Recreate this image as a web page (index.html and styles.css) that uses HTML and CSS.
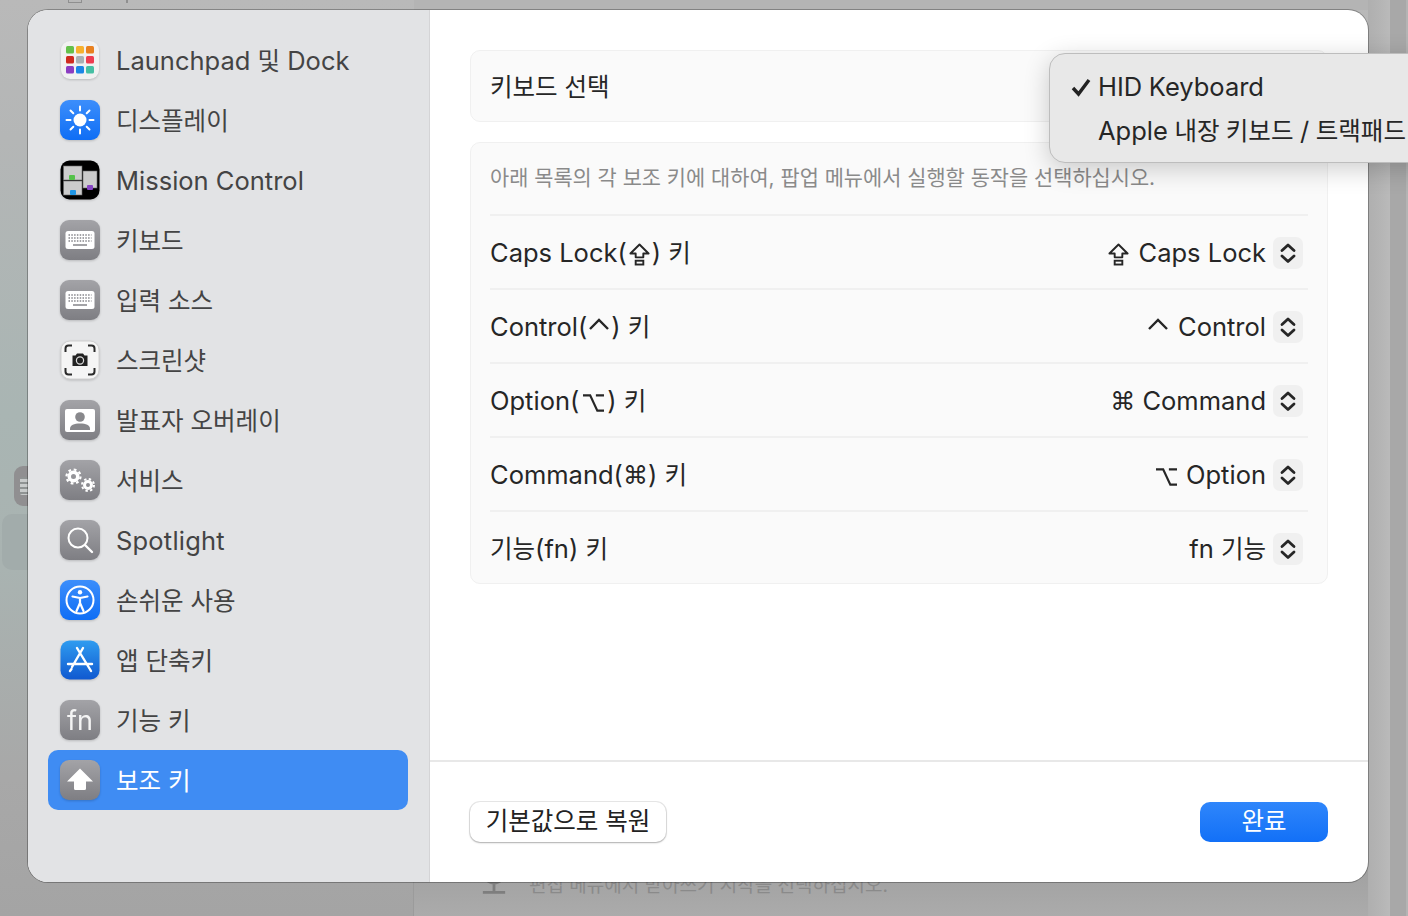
FILE: index.html
```html
<!DOCTYPE html>
<html lang="ko">
<head>
<meta charset="utf-8">
<title>보조 키</title>
<link rel="stylesheet" href="styles.css">
</head>
<body>
<div class="behind behind-tile"><span class="behind-key"></span></div>
<div class="behind behind-well"></div>
<div class="behind behind-panel"></div>
<div class="behind behind-strip-a"></div>
<div class="behind behind-strip-b"></div>
<div class="behind behind-top"></div>
<div class="behind behind-frag-a"></div>
<div class="behind behind-frag-b"></div>
<div class="behind behind-hint">
  <svg class="behind-mic" viewBox="0 0 28 28"><path d="M3 2a11 12 0 0 0 22 0M14 14v9M2 24h24" fill="none" stroke="#7e7e7e" stroke-width="3"/></svg>
  <span>편집 메뉴에서 받아쓰기 시작을 선택하십시오.</span>
</div>

<div class="window">
  <aside class="sidebar">
    <div class="nav-item">
      <svg class="icon" viewBox="0 0 40 40"><rect x="1" y="1" width="38" height="38" rx="9" fill="#f1f1f1"/><rect x="6" y="6" width="8" height="7.500" rx="1.500" fill="#64c04a"/><rect x="16" y="6" width="8" height="7.500" rx="1.500" fill="#f6b12e"/><rect x="26" y="6" width="8" height="7.500" rx="1.500" fill="#e8801f"/><rect x="6" y="16" width="8" height="7.500" rx="1.500" fill="#cf2a1f"/><rect x="16" y="16" width="8" height="7.500" rx="1.500" fill="#a9b0b4"/><rect x="26" y="16" width="8" height="7.500" rx="1.500" fill="#ee3c50"/><rect x="6" y="26" width="8" height="7.500" rx="1.500" fill="#8b3cc2"/><rect x="16" y="26" width="8" height="7.500" rx="1.500" fill="#1b86e6"/><rect x="26" y="26" width="8" height="7.500" rx="1.500" fill="#45bfa3"/></svg>
      <span class="lift">Launchpad <span class="ko">및</span> Dock</span>
    </div>
    <div class="nav-item">
      <svg class="icon" viewBox="0 0 40 40"><defs><linearGradient id="blue" x1="0" y1="0" x2="0" y2="1"><stop offset="0" stop-color="#3c8efb"/><stop offset="1" stop-color="#0f6ef5"/></linearGradient><linearGradient id="gray" x1="0" y1="0" x2="0" y2="1"><stop offset="0" stop-color="#a3a3a7"/><stop offset="1" stop-color="#7e7e83"/></linearGradient><linearGradient id="store" x1="0" y1="0" x2="0" y2="1"><stop offset="0" stop-color="#2f9cf0"/><stop offset="1" stop-color="#1059d0"/></linearGradient></defs><rect width="40" height="40" rx="9" fill="url(#blue)"/><circle cx="20" cy="20" r="6.500" fill="#fff"/><path d="M20 6.500v4M20 29.500v4M6.500 20h4M29.500 20h4M10.500 10.500l2.800 2.800M26.700 26.700l2.800 2.800M10.500 29.500l2.800-2.800M26.700 13.300l2.800-2.800" stroke="#fff" stroke-width="2" stroke-linecap="round"/></svg>
      <span class="ko lift">디스플레이</span>
    </div>
    <div class="nav-item">
      <svg class="icon" viewBox="0 0 40 40"><rect x="0.500" y="0.500" width="39" height="39" rx="9" fill="#000"/><rect x="3.500" y="6" width="18.500" height="14" fill="#ccc" stroke="#666" stroke-width=".6"/><rect x="3.500" y="21" width="18.500" height="14" fill="#ccc" stroke="#666" stroke-width=".6"/><rect x="23" y="11" width="14" height="17" fill="#ccc" stroke="#666" stroke-width=".6"/><rect x="9" y="15" width="6" height="5" rx="1" fill="#55c24a"/><rect x="10" y="30" width="6" height="5" rx="1" fill="#1f96e6"/><rect x="27" y="25" width="6" height="5" rx="1" fill="#8745c4"/></svg>
      <span class="drop">Mission Control</span>
    </div>
    <div class="nav-item">
      <svg class="icon" viewBox="0 0 40 40"><rect width="40" height="40" rx="9" fill="url(#gray)"/><rect x="5.500" y="11" width="29" height="18" rx="2.500" fill="#fff"/><path d="M8.500 15h23M8.500 18h23M8.500 21h23" stroke="#85858a" stroke-width="1.500" stroke-dasharray="1.500 1.300"/><path d="M13 25h14" stroke="#85858a" stroke-width="1.500"/></svg>
      <span class="ko lift">키보드</span>
    </div>
    <div class="nav-item">
      <svg class="icon" viewBox="0 0 40 40"><rect width="40" height="40" rx="9" fill="url(#gray)"/><rect x="5.500" y="11" width="29" height="18" rx="2.500" fill="#fff"/><path d="M8.500 15h23M8.500 18h23M8.500 21h23" stroke="#85858a" stroke-width="1.500" stroke-dasharray="1.500 1.300"/><path d="M13 25h14" stroke="#85858a" stroke-width="1.500"/></svg>
      <span class="ko lift">입력 소스</span>
    </div>
    <div class="nav-item">
      <svg class="icon" viewBox="0 0 40 40"><rect x="1" y="1" width="38" height="38" rx="9" fill="#f5f5f5" stroke="#d0d0d0"/><path d="M5.500 12V8.500a3 3 0 0 1 3-3H12M28 5.500h3.500a3 3 0 0 1 3 3V12M34.500 28v3.500a3 3 0 0 1-3 3H28M12 34.500H8.500a3 3 0 0 1-3-3V28" fill="none" stroke="#2a2a2a" stroke-width="2"/><path d="M12.500 15.500h3l1.500-2h6l1.500 2h3v10.500h-15z" fill="#222"/><circle cx="20" cy="20.500" r="3.600" fill="none" stroke="#ddd" stroke-width="1.200"/></svg>
      <span class="ko lift">스크린샷</span>
    </div>
    <div class="nav-item">
      <svg class="icon" viewBox="0 0 40 40"><rect width="40" height="40" rx="9" fill="url(#gray)"/><rect x="5" y="9" width="30" height="23" rx="2" fill="#fff"/><circle cx="20" cy="17" r="4.800" fill="#88888c"/><path d="M10 30v-1c0-4 4-5.500 10-5.500s10 1.500 10 5.500v1z" fill="#88888c"/></svg>
      <span class="ko lift">발표자 오버레이</span>
    </div>
    <div class="nav-item">
      <svg class="icon" viewBox="0 0 40 40"><rect width="40" height="40" rx="9" fill="url(#gray)"/><circle cx="13.500" cy="16.500" r="4.250" fill="none" stroke="#fff" stroke-width="3.500"/><circle cx="13.500" cy="16.500" r="7" fill="none" stroke="#fff" stroke-width="2.200" stroke-dasharray="2.750 2.750"/><circle cx="28" cy="25" r="3.500" fill="none" stroke="#fff" stroke-width="3"/><circle cx="28" cy="25" r="6" fill="none" stroke="#fff" stroke-width="2" stroke-dasharray="2.360 2.360"/></svg>
      <span class="ko lift">서비스</span>
    </div>
    <div class="nav-item">
      <svg class="icon" viewBox="0 0 40 40"><rect width="40" height="40" rx="9" fill="url(#gray)"/><circle cx="18" cy="18" r="9.500" fill="none" stroke="#fff" stroke-width="2"/><path d="M25 25l7 7" stroke="#fff" stroke-width="2.400" stroke-linecap="round"/></svg>
      <span class="wide">Spotlight</span>
    </div>
    <div class="nav-item">
      <svg class="icon" viewBox="0 0 40 40"><rect width="40" height="40" rx="9" fill="url(#blue)"/><circle cx="20" cy="20" r="13.500" fill="none" stroke="#fff" stroke-width="2"/><circle cx="20" cy="12.300" r="2.200" fill="#fff"/><path d="M12.500 16.500L20 18l7.500-1.500M20 18v5M20 23l-3.500 8M20 23l3.500 8" fill="none" stroke="#fff" stroke-width="2.200" stroke-linecap="round" stroke-linejoin="round"/></svg>
      <span class="ko lift">손쉬운 사용</span>
    </div>
    <div class="nav-item">
      <svg class="icon" viewBox="0 0 40 40"><rect x="0.500" y="0.500" width="39" height="39" rx="9" fill="url(#store)"/><path d="M23 8L12 27M17 8l14 23M8 24h24M10 31l1.500-2" fill="none" stroke="#fff" stroke-width="2.400" stroke-linecap="round"/></svg>
      <span class="ko lift">앱 단축키</span>
    </div>
    <div class="nav-item">
      <span class="icon fn-tile">fn</span>
      <span class="ko lift">기능 키</span>
    </div>
    <div class="nav-item nav-active">
      <svg class="icon" viewBox="0 0 40 40"><rect width="40" height="40" rx="9" fill="url(#gray)"/><path d="M20 8.500L33 21.500h-7v7a1.500 1.500 0 0 1-1.500 1.500h-9a1.500 1.500 0 0 1-1.500-1.500v-7H7z" fill="#fff"/></svg>
      <span class="ko lift">보조 키</span>
    </div>
  </aside>

  <main class="main">
    <div class="content">
      <section class="card card-select"><span class="ko lift">키보드 선택</span></section>
      <section class="card">
        <p class="hint">아래 목록의 각 보조 키에 대하여, 팝업 메뉴에서 실행할 동작을 선택하십시오.</p>
        <div class="row">
          <span class="label">Caps Lock(<svg class="sym sym-caps" viewBox="0 0 22 24"><path d="M11 1.500L20.500 11H15v4H7v-4H1.500z" fill="none" stroke="#262626" stroke-width="2" stroke-linejoin="round"/><rect x="7" y="18.500" width="8" height="4" fill="none" stroke="#262626" stroke-width="2"/></svg>) <span class="ko">키</span></span>
          <div class="value"><span><svg class="sym sym-caps" viewBox="0 0 22 24"><path d="M11 1.500L20.500 11H15v4H7v-4H1.500z" fill="none" stroke="#262626" stroke-width="2" stroke-linejoin="round"/><rect x="7" y="18.500" width="8" height="4" fill="none" stroke="#262626" stroke-width="2"/></svg> Caps Lock</span><svg class="stepper" viewBox="0 0 30 32"><rect width="30" height="32" rx="7" fill="#f0f0f0"/><path d="M9 13.500L15 8l6 5.500M9 19l6 5.500L21 19" fill="none" stroke="#262626" stroke-width="2.800" stroke-linecap="round" stroke-linejoin="round"/></svg></div>
        </div>
        <div class="row">
          <span class="label">Control(<svg class="sym sym-ctrl" viewBox="0 0 22 14"><path d="M2 12L11 3l9 9" fill="none" stroke="#262626" stroke-width="2.400"/></svg>) <span class="ko">키</span></span>
          <div class="value"><span><svg class="sym sym-ctrl" viewBox="0 0 22 14"><path d="M2 12L11 3l9 9" fill="none" stroke="#262626" stroke-width="2.400"/></svg> Control</span><svg class="stepper" viewBox="0 0 30 32"><rect width="30" height="32" rx="7" fill="#f0f0f0"/><path d="M9 13.500L15 8l6 5.500M9 19l6 5.500L21 19" fill="none" stroke="#262626" stroke-width="2.800" stroke-linecap="round" stroke-linejoin="round"/></svg></div>
        </div>
        <div class="row">
          <span class="label">Option(<svg class="sym sym-opt" viewBox="0 0 22 20"><path d="M0 2h7.500L15 18h7M13.500 2H22" fill="none" stroke="#262626" stroke-width="2.300"/></svg>) <span class="ko">키</span></span>
          <div class="value"><span><span class="sym-cmd">⌘</span> Command</span><svg class="stepper" viewBox="0 0 30 32"><rect width="30" height="32" rx="7" fill="#f0f0f0"/><path d="M9 13.500L15 8l6 5.500M9 19l6 5.500L21 19" fill="none" stroke="#262626" stroke-width="2.800" stroke-linecap="round" stroke-linejoin="round"/></svg></div>
        </div>
        <div class="row">
          <span class="label">Command(<span class="sym-cmd">⌘</span>) <span class="ko">키</span></span>
          <div class="value"><span><svg class="sym sym-opt" viewBox="0 0 22 20"><path d="M0 2h7.500L15 18h7M13.500 2H22" fill="none" stroke="#262626" stroke-width="2.300"/></svg> Option</span><svg class="stepper" viewBox="0 0 30 32"><rect width="30" height="32" rx="7" fill="#f0f0f0"/><path d="M9 13.500L15 8l6 5.500M9 19l6 5.500L21 19" fill="none" stroke="#262626" stroke-width="2.800" stroke-linecap="round" stroke-linejoin="round"/></svg></div>
        </div>
        <div class="row">
          <span class="label"><span class="ko">기능</span>(fn) <span class="ko">키</span></span>
          <div class="value"><span>fn <span class="ko">기능</span></span><svg class="stepper" viewBox="0 0 30 32"><rect width="30" height="32" rx="7" fill="#f0f0f0"/><path d="M9 13.500L15 8l6 5.500M9 19l6 5.500L21 19" fill="none" stroke="#262626" stroke-width="2.800" stroke-linecap="round" stroke-linejoin="round"/></svg></div>
        </div>
      </section>
    </div>
    <footer class="footer">
      <button class="btn btn-plain"><span class="ko">기본값으로 복원</span></button>
      <button class="btn btn-primary"><span class="ko">완료</span></button>
    </footer>
  </main>
</div>

<div class="popup">
  <div class="popup-item"><svg class="check" viewBox="0 0 20 20"><path d="M2 11l5.500 6L18 3" fill="none" stroke="#222" stroke-width="3.400"/></svg><span>HID Keyboard</span></div>
  <div class="popup-item"><span class="check"></span><span>Apple <span class="ko">내장 키보드</span> / <span class="ko">트랙패드</span></span></div>
</div>
</body>
</html>
```

FILE: styles.css
```css
* { box-sizing: border-box; }

html, body { height: 100%; }

body {
  margin: 0;
  overflow: hidden;
  position: relative;
  padding: 10px 0 0 28px;
  font-family: Inter, "Noto Sans CJK KR", "DejaVu Sans", sans-serif;
  font-size: 25.5px;
  color: #262626;
  background:
    linear-gradient(180deg, #b9b9b9 0, #b4b6b6 15%, #a9b5b3 45%, #a9b3b1 62%, #a8a8a8 85%, #a4a4a4 100%);
}

.ko { font-size: 24.5px; }

.lift { margin-bottom: 2px; }

.drop { margin-top: 1px; }

.wide { letter-spacing: .2px; }

.sym { display: inline-block; margin: 0 2px; }

.sym-caps { width: 21px; height: 23px; vertical-align: -4px; }

.sym-ctrl { width: 22px; height: 14px; vertical-align: 5px; }

.sym-opt { width: 21px; height: 20px; vertical-align: -3px; }

.sym-cmd { font-family: "DejaVu Sans", sans-serif; font-size: 25px; }

/* Things behind the sheet */
.behind { position: absolute; }

.behind-tile {
  left: 14px;
  top: 466px;
  width: 40px;
  height: 40px;
  border-radius: 9px;
  background: #908f91;
}

.behind-key {
  position: absolute;
  left: 6px;
  top: 11px;
  width: 28px;
  height: 18px;
  border-radius: 2px;
  background: repeating-linear-gradient(180deg, #8f9393 0 2px, #c8cbcb 2px 5px);
}

.behind-well {
  left: 2px;
  top: 514px;
  width: 40px;
  height: 56px;
  border-radius: 10px;
  background: #a2acab;
}

.behind-panel {
  left: 413px;
  top: 860px;
  width: 955px;
  height: 56px;
  border-left: 1px solid #9b9b9b;
  background: linear-gradient(180deg, #9f9f9f, #ababab);
}

.behind-strip-a {
  left: 1368px;
  top: 0;
  width: 22px;
  height: 916px;
  background: linear-gradient(90deg, #afafaf 0, #b5b5b5 60%, #bababa 100%);
}

.behind-strip-b {
  left: 1390px;
  top: 0;
  width: 18px;
  height: 916px;
  background: linear-gradient(90deg, #a8a8a8 0, #a8a8a8 88%, #b4b4b4 88%);
}

.behind-top {
  left: 414px;
  top: 0;
  width: 954px;
  height: 10px;
  background: #b4b4b4;
}

.behind-frag-a {
  left: 68px;
  top: 0;
  width: 14px;
  height: 3px;
  border: 1px solid #8f8f8f;
  border-top: 0;
}

.behind-frag-b {
  left: 126px;
  top: 0;
  width: 2px;
  height: 3px;
  background: #8f8f8f;
}

.behind-hint {
  left: 481px;
  top: 870px;
  display: flex;
  align-items: center;
  gap: 22px;
  height: 26px;
  font-size: 19px;
  color: #8a8a8a;
}

.behind-mic { width: 26px; height: 26px; }

/* Sheet */
.window {
  position: relative;
  display: flex;
  width: 1340px;
  height: 872px;
  border-radius: 20px;
  overflow: hidden;
  background: #fff;
  box-shadow: 0 0 0 1px rgba(0, 0, 0, .28);
}

.sidebar {
  flex: none;
  width: 402px;
  padding: 20px 21px 0 20px;
  background: #e2e3e5;
  border-right: 1px solid #d4d4d6;
  color: #444;
}

.nav-item {
  display: flex;
  align-items: center;
  gap: 16px;
  height: 60px;
  padding-left: 12px;
  border-radius: 10px;
}

.nav-active {
  background: #3f8cf3;
  color: #fff;
}

.icon {
  flex: none;
  width: 40px;
  height: 40px;
  filter: drop-shadow(0 1px 1px rgba(0, 0, 0, .18));
}

.fn-tile {
  display: flex;
  align-items: center;
  justify-content: center;
  border-radius: 9px;
  font-size: 27px;
  color: #f4f4f4;
  background: linear-gradient(180deg, #a3a3a7, #7e7e83);
}

.main {
  flex: 1;
  display: flex;
  flex-direction: column;
  min-width: 0;
}

.content {
  flex: 1;
  display: flex;
  flex-direction: column;
  gap: 20px;
  padding: 40px 40px 0;
}

.card {
  border: 1px solid #f0f0f0;
  border-radius: 10px;
  background: #fafafa;
  padding: 0 19px;
}

.card-select {
  display: flex;
  align-items: center;
  height: 72px;
}

.hint {
  display: flex;
  align-items: center;
  height: 71px;
  margin: 0;
  padding-bottom: 5px;
  font-size: 20.85px;
  color: #8a8a8a;
}

.row {
  display: flex;
  align-items: center;
  justify-content: space-between;
  height: 74px;
  border-top: 2px solid #f0f0f0;
}

.row:last-child { height: 73px; }

.label { margin-bottom: 2px; }

.label .sym-opt { margin: 0 3px 0 4px; }

.label .sym-ctrl { margin: 0 1px; }

.row:last-child .label { margin-bottom: 0; }

.value {
  display: flex;
  align-items: center;
  gap: 7px;
  margin-top: 2px;
  padding-right: 5px;
}

.value > span { margin-bottom: 2px; }

.stepper {
  flex: none;
  width: 30px;
  height: 32px;
}

.footer {
  flex: none;
  display: flex;
  align-items: center;
  justify-content: space-between;
  height: 122px;
  padding: 0 40px;
  border-top: 2px solid #e8e8e8;
}

.btn {
  height: 40px;
  border: 0;
  border-radius: 10px;
  font: inherit;
  padding: 0 0 5px;
}

.btn-plain {
  width: 196px;
  background: #fff;
  color: #222;
  box-shadow: 0 0 0 1px rgba(0, 0, 0, .09), 0 1px 2px rgba(0, 0, 0, .25);
}

.btn-primary {
  width: 128px;
  color: #fff;
  background: linear-gradient(180deg, #2f86fb, #1270f7);
}

/* Popup menu */
.popup {
  position: absolute;
  left: 1049px;
  top: 53px;
  width: 420px;
  padding: 11px 0;
  border: 1px solid #bdbdbd;
  border-radius: 16px;
  background: #e8e8e8;
  box-shadow: 0 6px 26px rgba(0, 0, 0, .2);
}

.popup-item {
  display: flex;
  align-items: center;
  gap: 7px;
  height: 43px;
  padding-left: 21px;
  word-spacing: -.6px;
}

.check {
  flex: none;
  width: 20px;
  height: 20px;
}
```
